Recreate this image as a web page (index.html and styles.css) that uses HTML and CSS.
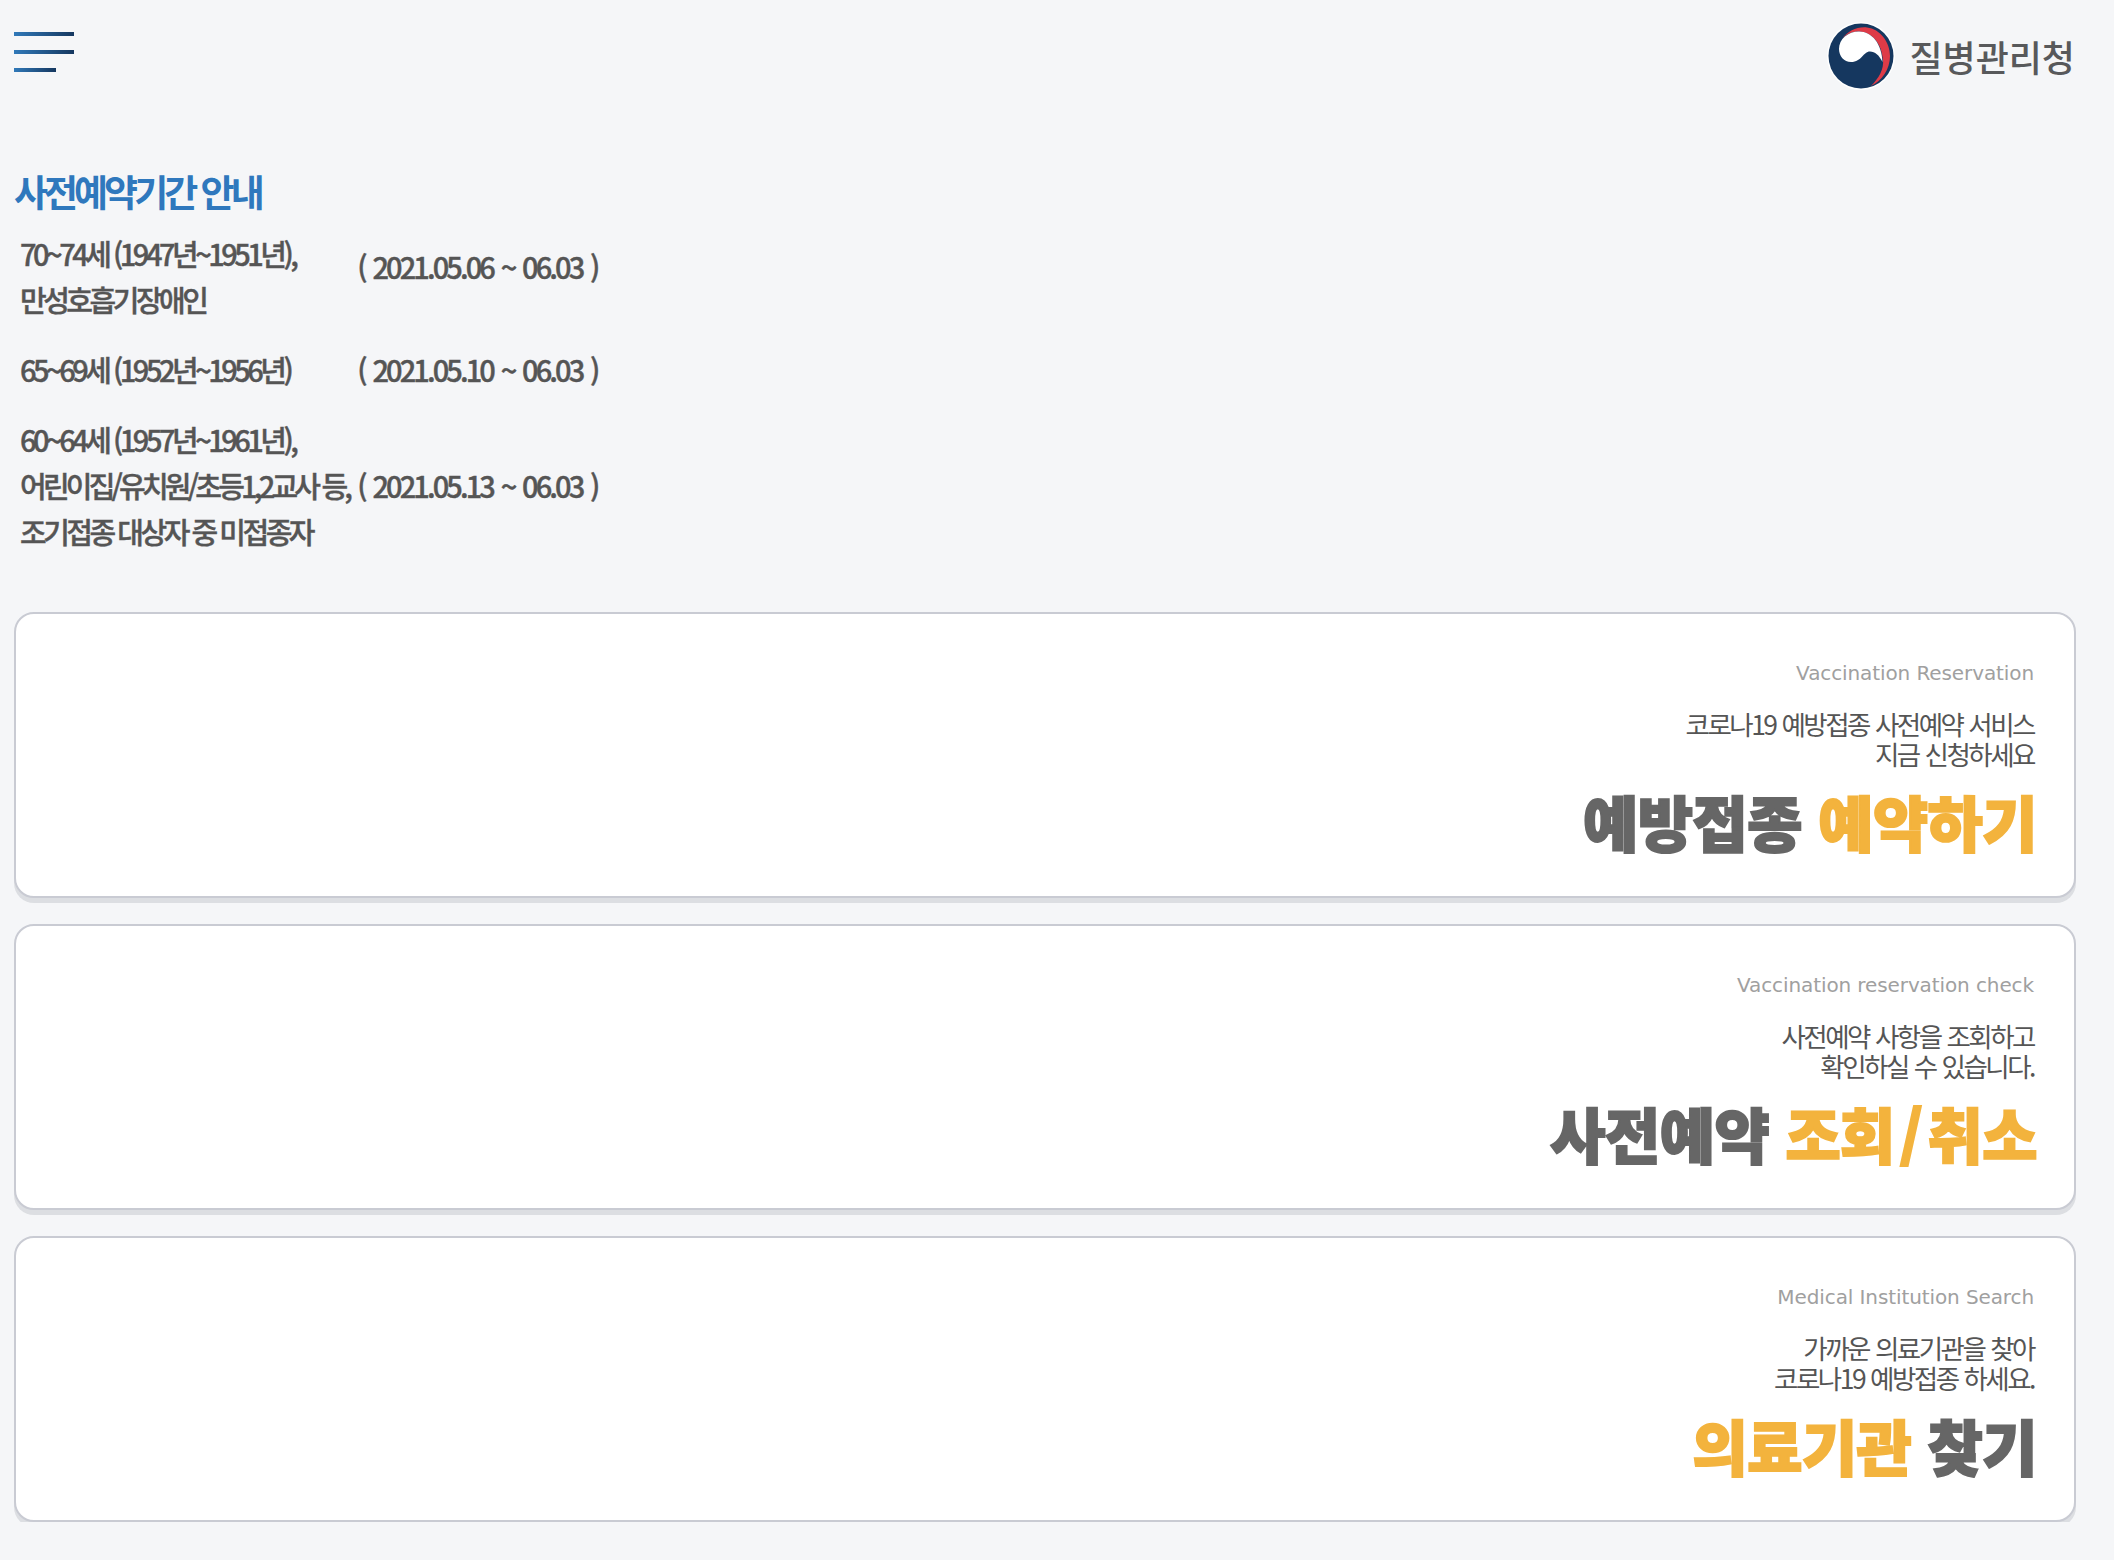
FILE: index.html
```html
<!DOCTYPE html>
<html lang="ko">
<head>
<meta charset="UTF-8">
<title>사전예약</title>
<link rel="stylesheet" href="styles.css">
</head>
<body>
<header class="header">
<div class="menu">
<span class="bar"></span>
<span class="bar"></span>
<span class="bar short"></span>
</div>
<div class="logo">
<svg class="emblem" width="68" height="68" viewBox="0 0 68 68">
<circle cx="34" cy="34" r="34" fill="#fff"/>
<circle cx="34" cy="34" r="32.5" fill="#15375f"/>
<path d="M15 17C21 9 30 4.5 40 5.5C53 7 63 20 63 34C63 47 55 59 44 64C52 56 57 47 56 38C55 22 45 9.5 32 9.5C25 9.5 19 12 15 17Z" fill="#de3b47"/>
<path d="M12 27C12 17 21 9.5 32 9.5C45 9.5 55 22 55.5 40C52 33 48 29.5 43 29.5C36 29.5 35 40 24 40C17 40 12 34 12 27Z" fill="#fff"/>
</svg>
<span class="logo-text">질병관리청</span>
</div>
</header>

<section class="info">
<h2 class="info-title">사전예약기간 안내</h2>
<table class="info-table">
<tr>
<td>70~74세 (1947년~1951년),<br>만성호흡기장애인</td>
<td class="date date-up">( 2021.05.06 ~ 06.03 )</td>
</tr>
<tr>
<td>65~69세 (1952년~1956년)</td>
<td class="date">( 2021.05.10 ~ 06.03 )</td>
</tr>
<tr>
<td>60~64세 (1957년~1961년),<br><span class="tight">어린이집/유치원/초등1,2교사 등,</span><br>조기접종 대상자 중 미접종자</td>
<td class="date">( 2021.05.13 ~ 06.03 )</td>
</tr>
</table>
</section>

<main class="cards">
<a class="card">
<p class="card-en">Vaccination Reservation</p>
<p class="card-desc">코로나19 예방접종 사전예약 서비스<br>지금 신청하세요</p>
<p class="card-title">예방접종 <em>예약하기</em></p>
</a>
<a class="card">
<p class="card-en">Vaccination reservation check</p>
<p class="card-desc">사전예약 사항을 조회하고<br>확인하실 수 있습니다.</p>
<p class="card-title">사전예약 <em>조회<span class="slash">/</span>취소</em></p>
</a>
<a class="card">
<p class="card-en">Medical Institution Search</p>
<p class="card-desc">가까운 의료기관을 찾아<br>코로나19 예방접종 하세요.</p>
<p class="card-title"><em>의료기관</em> 찾기</p>
</a>
</main>
</body>
</html>
```

FILE: styles.css
```css
* {
box-sizing: border-box;
}
html, body {
margin: 0;
padding: 0;
}
body {
background-color: #f5f6f8;
font-family: "Noto Sans CJK KR", "Noto Sans", sans-serif;
color: #555;
}
.header {
display: flex;
justify-content: space-between;
align-items: flex-start;
padding: 22px 39px 0 14px;
height: 166px;
}
.menu {
display: flex;
flex-direction: column;
gap: 14px;
width: 60px;
padding-top: 10px;
}
.bar {
display: block;
height: 4px;
width: 60px;
background: linear-gradient(to right, #3079b9, #15375f);
}
.bar.short {
width: 42px;
}
.logo {
display: flex;
align-items: center;
gap: 14px;
}
.logo-text {
font-size: 36px;
font-weight: 500;
color: #58595b;
line-height: 68px;
}
.info {
padding-left: 14px;
height: 446px;
}
.info-title {
margin: 0;
font-size: 37px;
line-height: 50px;
font-weight: 700;
letter-spacing: -4px;
color: #2f78bd;
}
.info-table {
border-collapse: collapse;
margin-top: 2px;
}
.info-table td {
padding: 12px 5px 12px 6px;
font-size: 29px;
line-height: 46px;
font-weight: 500;
letter-spacing: -3.5px;
-webkit-text-stroke: 0.4px;
color: #555;
white-space: nowrap;
vertical-align: middle;
}
.info-table .tight {
letter-spacing: -3.8px;
}
.info-table .date {
padding-left: 3px;
letter-spacing: -2.9px;
word-spacing: 2.5px;
}
.info-table .date-up {
padding-bottom: 32px;
}
.cards {
display: flex;
flex-direction: column;
gap: 26px;
padding: 0 38px 0 14px;
}
.card {
display: block;
height: 286px;
background-color: #fff;
border: 2px solid #c9cbd3;
border-radius: 20px;
box-shadow: 0 5px 0 #dcdee2;
padding: 45px 40px 0 0;
text-align: right;
}
.card p {
margin: 0;
}
.card-en {
font-family: "DejaVu Sans", sans-serif;
font-size: 20px;
line-height: 28px;
letter-spacing: -0.1px;
color: #a0a0a0;
}
.card-desc {
margin-top: 22px !important;
font-size: 26.5px;
line-height: 30px;
letter-spacing: -2.5px;
word-spacing: 1px;
color: #555;
}
.card-title {
margin-top: 13px !important;
margin-right: -3px !important;
font-size: 60px;
line-height: 78px;
font-weight: 900;
letter-spacing: -0.5px;
-webkit-text-stroke: 2px;
color: #666;
}
.card-title em {
font-style: normal;
color: #f3b33d;
}
.card-title .slash {
margin: 0 5px;
}
```
